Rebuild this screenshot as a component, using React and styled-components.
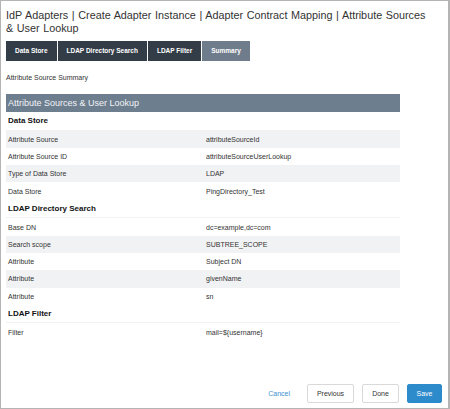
import React from 'react';
import styled, { createGlobalStyle } from 'styled-components';

const GlobalStyle = createGlobalStyle`
  html, body {
    margin: 0;
    padding: 0;
    background: #fff;
  }
  body {
    font-family: "Liberation Sans", Arial, sans-serif;
    color: #333;
  }
`;

const Frame = styled.div`
  box-sizing: border-box;
  width: 450px;
  height: 409px;
  border: 1px solid #b4b4b4;
  border-right-width: 2px;
  display: flex;
  flex-direction: column;
  padding: 8px 6px 5px 5px;
`;

const Title = styled.h1`
  margin: 0;
  width: 425px;
  font-size: 10.8px;
  line-height: 13px;
  font-weight: normal;
  word-spacing: 0.6px;
  color: #333;
`;

const Tabs = styled.div`
  display: flex;
  gap: 1px;
  margin-top: 6px;
`;

const Tab = styled.div`
  height: 20px;
  line-height: 20px;
  padding: 0 9px;
  font-size: 6.5px;
  font-weight: bold;
  color: #fff;
  background: ${p => (p.active ? '#6f7c8b' : '#323d47')};
`;

const Subtitle = styled.div`
  margin-top: 13px;
  font-size: 7px;
  color: #333;
`;

const Table = styled.div`
  width: 394px;
  margin-top: 13px;
`;

const TableHead = styled.div`
  height: 18px;
  line-height: 18px;
  padding-left: 2px;
  background: #6d7e8f;
  color: #f2f4f6;
  font-size: 9px;
`;

const SectionTitle = styled.div`
  height: 18.6px;
  line-height: 18.6px;
  padding-left: 2px;
  font-size: 8px;
  font-weight: bold;
  color: #111;
  border-bottom: 1px solid #f2f2f2;
  box-sizing: border-box;
`;

const Row = styled.div`
  display: grid;
  grid-template-columns: 198px 1fr;
  height: 17.3px;
  align-items: center;
  font-size: 7px;
  color: #333;
  background: ${p => (p.shaded ? '#f1f2f3' : '#fff')};
`;

const Cell = styled.div`
  padding-left: 2px;
`;

const Footer = styled.div`
  margin-top: auto;
  display: flex;
  justify-content: flex-end;
  align-items: center;
  gap: 8px;
`;

const LinkButton = styled.span`
  font-size: 7px;
  color: #3b8fd0;
  margin-right: 9px;
`;

const Button = styled.button`
  box-sizing: border-box;
  height: 19px;
  min-width: ${p => p.w}px;
  padding: 0;
  font-family: inherit;
  font-size: 7px;
  border-radius: 2px;
  border: 1px solid ${p => (p.primary ? '#2d8bcb' : '#d9d9d9')};
  background: ${p => (p.primary ? '#2d8bcb' : '#fff')};
  color: ${p => (p.primary ? '#fff' : '#333')};
`;

const sections = [
  {
    title: 'Data Store',
    rows: [
      ['Attribute Source', 'attributeSourceId', true],
      ['Attribute Source ID', 'attributeSourceUserLookup', false],
      ['Type of Data Store', 'LDAP', true],
      ['Data Store', 'PingDirectory_Test', false],
    ],
  },
  {
    title: 'LDAP Directory Search',
    rows: [
      ['Base DN', 'dc=example,dc=com', false],
      ['Search scope', 'SUBTREE_SCOPE', true],
      ['Attribute', 'Subject DN', false],
      ['Attribute', 'givenName', true],
      ['Attribute', 'sn', false],
    ],
  },
  {
    title: 'LDAP Filter',
    rows: [['Filter', 'mail=${username}', false]],
  },
];

const App = () => {
  return (
    <>
      <GlobalStyle />
      <Frame>
        <Title>
          IdP Adapters | Create Adapter Instance | Adapter Contract Mapping | Attribute Sources &amp; User Lookup
        </Title>

        <Tabs>
          <Tab>Data Store</Tab>
          <Tab>LDAP Directory Search</Tab>
          <Tab>LDAP Filter</Tab>
          <Tab active>Summary</Tab>
        </Tabs>

        <Subtitle>Attribute Source Summary</Subtitle>

        <Table>
          <TableHead>Attribute Sources &amp; User Lookup</TableHead>
          {sections.map(section => (
            <React.Fragment key={section.title}>
              <SectionTitle>{section.title}</SectionTitle>
              {section.rows.map(([label, value, shaded], i) => (
                <Row key={i} shaded={shaded}>
                  <Cell>{label}</Cell>
                  <Cell>{value}</Cell>
                </Row>
              ))}
            </React.Fragment>
          ))}
        </Table>

        <Footer>
          <LinkButton>Cancel</LinkButton>
          <Button w={47}>Previous</Button>
          <Button w={37}>Done</Button>
          <Button w={35} primary>Save</Button>
        </Footer>
      </Frame>
    </>
  );
};

export default App;
